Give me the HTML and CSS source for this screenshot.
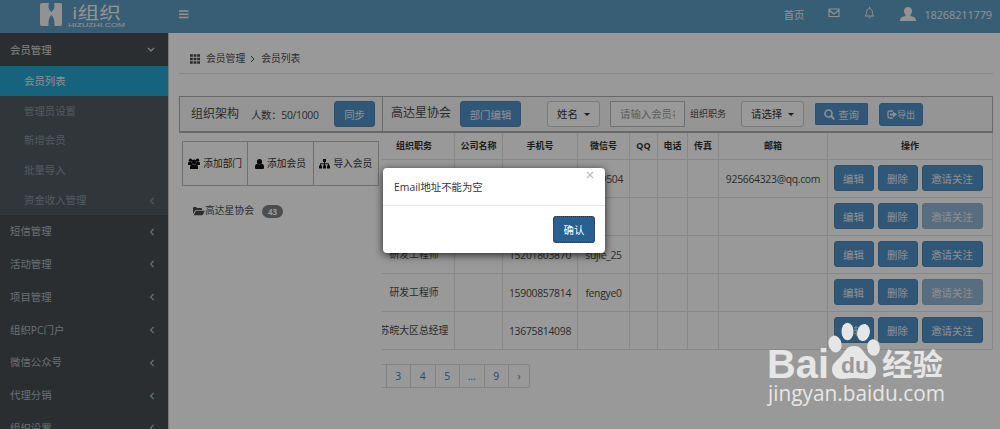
FILE: index.html
```
<!DOCTYPE html>
<html lang="zh-CN">
<head>
	<meta charset="utf-8">
	<title>会员列表</title>
	<link rel="stylesheet" href="styles.css">
</head>
<body>
	<svg class="defs">
		<symbol id="left" viewBox="0 0 6 8"><path d="M4.700 1L1.500 4l3.200 3" fill="none" stroke="currentColor" stroke-width="1.100"/></symbol>
		<symbol id="user" viewBox="0 0 16 14"><path d="M8 0c2.600 0 4 1.700 4 4 0 1.700-.7 3.200-1.800 4 .2 1 1 1.200 2.300 1.600C14.600 10.300 16 11 16 14H0c0-3 1.400-3.700 3.500-4.400C4.800 9.200 5.600 9 5.800 8 4.700 7.200 4 5.700 4 4c0-2.300 1.400-4 4-4z" fill="currentColor"/></symbol>
	</svg>

	<header>
		<div class="logo">
			<svg width="168" height="33">
				<path d="M42 3h7q-2 5 2.300 9Q56 8 54 3h6q2 0 2 2v19q0 2-2 2h-5.500q.5-8-3.200-11-3.300 3-2.800 11H42q-2 0-2-2V5q0-2 2-2z" fill="currentColor"/>
				<text class="brand" x="72" y="18.500" textLength="49" lengthAdjust="spacingAndGlyphs">i组织</text>
				<text class="domain" x="68" y="26.500" textLength="57" lengthAdjust="spacingAndGlyphs">HIZUZHI.COM</text>
			</svg>
		</div>
		<svg class="bars" width="10" height="9"><path d="M0 1h9.500M0 4.200h9.500M0 7.400h9.500" stroke="currentColor" stroke-width="1.500"/></svg>
		<div class="topnav">
			<span class="home">首页</span>
			<svg class="mail" width="12" height="10"><path d="M1 1h10v7.500H1zM1 2l5 4 5-4" fill="none" stroke="currentColor" stroke-width="1.100"/></svg>
			<svg class="bell" width="11" height="12"><path d="M5.500 0v1.500M1 9h9C8.700 8 8.300 7 8.300 4.800 8.300 3 7.200 1.600 5.500 1.600S2.700 3 2.700 4.800C2.700 7 2.300 8 1 9zM4.500 10.400q1 1.200 2 0" fill="none" stroke="currentColor"/></svg>
			<svg class="avatar" width="16" height="14"><use href="#user"/></svg>
			<span class="num">18268211779</span>
		</div>
	</header>

	<div class="wrapper">
		<ul class="sidebar">
			<li class="open">会员管理<svg width="8" height="6"><path d="M1 1l3 3 3-3" fill="none" stroke="currentColor" stroke-width="1.200"/></svg></li>
			<li>
				<ul class="submenu">
					<li class="active">会员列表</li>
					<li>管理员设置</li>
					<li>新增会员</li>
					<li>批量导入</li>
					<li>资金收入管理<svg width="6" height="8"><use href="#left"/></svg></li>
				</ul>
			</li>
			<li>短信管理<svg width="6" height="8"><use href="#left"/></svg></li>
			<li>活动管理<svg width="6" height="8"><use href="#left"/></svg></li>
			<li>项目管理<svg width="6" height="8"><use href="#left"/></svg></li>
			<li>组织PC门户<svg width="6" height="8"><use href="#left"/></svg></li>
			<li>微信公众号<svg width="6" height="8"><use href="#left"/></svg></li>
			<li>代理分销<svg width="6" height="8"><use href="#left"/></svg></li>
			<li>组织设置<svg width="6" height="8"><use href="#left"/></svg></li>
		</ul>

		<div class="content">
			<div class="crumb">
				<svg width="10" height="10"><path d="M0 1.500h10M0 5h10M0 8.500h10" stroke="currentColor" stroke-width="2.600" stroke-dasharray="2.800 .8"/></svg>
				<span>会员管理</span>
				<svg class="gt" width="5" height="8"><path d="M1 1l3 3-3 3" fill="none" stroke="currentColor"/></svg>
				<span>会员列表</span>
			</div>

			<div class="panel">
				<div class="org">
					<span class="title">组织架构</span>
					<span class="count">人数：50/1000</span>
					<button class="btn">同步</button>
				</div>
				<div class="filter">
					<span class="title">高达星协会</span>
					<button class="btn edit">部门编辑</button>
					<div class="select name">姓名<i></i></div>
					<div class="input"><span>请输入会员名</span></div>
					<label>组织职务</label>
					<div class="select choose">请选择<i></i></div>
					<button class="btn search"><svg width="11" height="11"><circle cx="4.500" cy="4.500" r="3.500" fill="none" stroke="currentColor" stroke-width="1.700"/><path d="M7 7l3.200 3.200" stroke="currentColor" stroke-width="2"/></svg>查询</button>
					<button class="btn export"><svg width="10" height="9"><path d="M6 1H2.500Q1 1 1 2.500v4Q1 8 2.500 8H6" fill="none" stroke="currentColor" stroke-width="1.300"/><path d="M3 3.500h3V1.500l4 3-4 3v-2H3z" fill="currentColor"/></svg>导出</button>
				</div>
			</div>

			<div class="body">
				<div class="tree">
					<div class="tools">
						<div><svg width="12" height="11" viewBox="0 0 12 11" fill="currentColor"><circle cx="2.500" cy="2.200" r="1.700"/><circle cx="9.500" cy="2.200" r="1.700"/><circle cx="6" cy="4" r="2.400"/><path d="M0 7V5q0-1 1-1h2.500l1 2.500L3 7zM12 7V5q0-1-1-1H8.500l-1 2.500L9 7zM2 11V9q0-2.500 2-2.500h4q2 0 2 2.500v2z"/></svg>添加部门</div>
						<div><svg width="9" height="10" viewBox="0 0 9 10" fill="currentColor"><circle cx="4.500" cy="2.700" r="2.600"/><path d="M0 9V7.500Q0 5 2.300 4.800q2.200 1.600 4.400 0Q9 5 9 7.500V9q0 1-1 1H1Q0 10 0 9z"/></svg>添加会员</div>
						<div><svg width="11" height="10" viewBox="0 0 11 10"><path d="M4 0h3v3H4zM0 6.500h3v3H0zM4 6.500h3v3H4zM8 6.500h3v3H8z" fill="currentColor"/><path d="M5.500 2v5M1.500 7V4.800h8V7" fill="none" stroke="currentColor"/></svg>导入会员</div>
					</div>
					<div class="node"><svg width="12" height="9" viewBox="0 0 12 9" fill="currentColor"><path d="M0 7V1q0-1 1-1h2l1 1h4q1 0 1 1v1H3.200Q2.300 3 1.800 4z"/><path d="M3 3.800h8.800L10 7.500q-.4.800-1.200.8H.6z"/></svg>高达星协会<b>43</b></div>
				</div>

				<div class="members">
					<table>
						<colgroup><col class="c1"><col class="c2"><col class="c3"><col class="c4"><col class="c5"><col class="c6"><col class="c7"><col class="c8"><col class="c9"></colgroup>
						<tr><th>组织职务</th><th>公司名称</th><th>手机号</th><th>微信号</th><th>QQ</th><th>电话</th><th>传真</th><th>邮箱</th><th>操作</th></tr>
						<tr><td></td><td></td><td></td><td class="num">yu09504</td><td></td><td></td><td></td><td class="num">925664323@qq.com</td><td class="ops"><button class="btn">编辑</button><button class="btn">删除</button><button class="btn">邀请关注</button></td></tr>
						<tr><td></td><td></td><td></td><td></td><td></td><td></td><td></td><td></td><td class="ops"><button class="btn">编辑</button><button class="btn">删除</button><button class="btn" disabled>邀请关注</button></td></tr>
						<tr><td>研发工程师</td><td></td><td class="num">15201803870</td><td class="num">sujie_25</td><td></td><td></td><td></td><td></td><td class="ops"><button class="btn">编辑</button><button class="btn">删除</button><button class="btn">邀请关注</button></td></tr>
						<tr><td>研发工程师</td><td></td><td class="num">15900857814</td><td class="num">fengye0</td><td></td><td></td><td></td><td></td><td class="ops"><button class="btn">编辑</button><button class="btn">删除</button><button class="btn" disabled>邀请关注</button></td></tr>
						<tr><td>苏皖大区总经理</td><td></td><td class="num">13675814098</td><td></td><td></td><td></td><td></td><td></td><td class="ops"><button class="btn">编辑</button><button class="btn">删除</button><button class="btn">邀请关注</button></td></tr>
					</table>
					<div class="pages"><a></a><a>3</a><a>4</a><a>5</a><a>...</a><a>9</a><a>›</a></div>
				</div>
			</div>
		</div>
	</div>

	<div class="backdrop"></div>
	<div class="modal">
		<div class="modal-body">Email地址不能为空<svg class="close" width="8" height="8"><path d="M1 1l6 6M7 1L1 7" stroke="currentColor" stroke-width="1.100"/></svg></div>
		<div class="modal-footer"><button class="btn ok">确认</button></div>
	</div>

	<svg class="watermark" width="190" height="95" fill="currentColor">
		<text class="bai" x="5" y="56.500" textLength="62" lengthAdjust="spacingAndGlyphs">Bai</text>
		<ellipse cx="73" cy="23" rx="6.500" ry="8.500" transform="rotate(-12 73 23)"/>
		<ellipse cx="85.500" cy="10.500" rx="6" ry="8.800"/>
		<ellipse cx="101.500" cy="11.500" rx="6.300" ry="8.700" transform="rotate(12 101.500 11.500)"/>
		<ellipse cx="111.500" cy="26.500" rx="6.300" ry="8.300" transform="rotate(-8 111.500 26.500)"/>
		<path d="M92 25c7 0 9 5 12 9 4 5 10 8 10 15 0 6-4 9-9 9-5 0-8-1-13-1s-8 1-12 1c-6 0-10-4-10-10 0-6 6-9 10-14 3-4 5-9 12-9z"/>
		<text class="du" x="79" y="52" textLength="28" lengthAdjust="spacingAndGlyphs">du</text>
		<text class="jy" x="120" y="53.500" textLength="61" lengthAdjust="spacingAndGlyphs">经验</text>
		<text class="url" x="6" y="80" textLength="177" lengthAdjust="spacingAndGlyphs">jingyan.baidu.com</text>
	</svg>
</body>
</html>
```
FILE: styles.css
```
*{
	box-sizing: border-box;
}
html,body{
	margin: 0;
	height: 429px;
	overflow: hidden;
}
body,button{
	font-family: 'Open Sans', 'Noto Sans CJK SC', sans-serif;
	font-size: 10.4px;
}
body{
	background-color: #fff;
	color: #4a4a4a;
	line-height: 14px;
}
ul{
	list-style: none;
	margin: 0;
	padding: 0;
}
svg{
	display: block;
	flex: none;
}
.defs{
	position: absolute;
	width: 0;
	height: 0;
}
header{
	display: flex;
	height: 33px;
	background-color: #5c9dc4;
	color: #f3f3f3;
}
.logo{
	width: 168px;
}
.brand{
	font-size: 17px;
	fill: currentColor;
}
.domain{
	font-family: 'Liberation Sans', sans-serif;
	font-size: 6px;
	fill: currentColor;
}
.bars{
	margin: 10px 0 0 11px;
}
.topnav{
	display: flex;
	margin-left: auto;
	padding: 8px 8px 0 0;
}
.topnav .num{
	font-size: 11px;
	letter-spacing: -0.15px;
}
.mail{
	margin: 0 24px 0 24px;
}
.bell{
	margin-top: -1px;
}
.avatar{
	margin: -1px 8px 0 25px;
}
.wrapper{
	display: flex;
}
.sidebar{
	width: 168px;
	height: 396px;
	flex: none;
	overflow: hidden;
	background-color: #464e53;
	color: #b2bac0;
}
.sidebar li{
	line-height: 32.8px;
}
.sidebar > li:not(:nth-child(2)), .submenu li{
	display: flex;
	align-items: center;
	justify-content: space-between;
	padding: 1px 13px 0 10px;
	height: 32.8px;
}
.sidebar > .open{
	height: 32.5px;
	color: #ddd;
}
.submenu{
	background-color: #505b61;
	color: #8c99a2;
	height: 149px;
}
.submenu .active{
	background-color: #24a5cf;
	color: #eee;
}
.submenu li, .submenu .active{
	height: 29.8px;
	line-height: 29.8px;
	padding: 2px 13px 0 24px;
}
.content{
	flex: 1;
	padding: 0 8px 0 10px;
	border-left: 1px solid #ccc;
}
.crumb{
	display: flex;
	align-items: center;
	height: 41px;
	padding: 11px 0 0 11px;
	border-bottom: 1px solid #e2e2e2;
}
.crumb span{
	margin-left: 6px;
	font-size: 9.8px;
}
.gt{
	margin-left: 5px;
}
.panel{
	display: flex;
	height: 37px;
	margin-top: 22px;
	border: 1px solid #b0b0b0;
	border-bottom-width: 2px;
	background-color: #f8f8f8;
}
.title{
	font-size: 12px;
}
.btn{
	height: 26px;
	padding: 0;
	border: 1px solid #4a86b8;
	border-radius: 3px;
	background-color: #5092c9;
	color: #eee;
}
.org{
	display: flex;
	align-items: center;
	width: 203px;
	padding-left: 11px;
	border-right: 1px solid #b0b0b0;
}
.count{
	width: 83px;
	margin: 1px 0 0 12px;
	white-space: nowrap;
	letter-spacing: -0.3px;
}
.org .btn{
	width: 41px;
}
.filter{
	display: flex;
	align-items: center;
	flex: 1;
	padding-left: 8px;
}
.filter .title{
	margin-top: -3px;
}
.edit{
	width: 61px;
	margin-left: 9px;
}
.select{
	display: flex;
	align-items: center;
	justify-content: space-between;
	height: 26px;
	padding: 0 9px;
	border: 1px solid #ccc;
	border-radius: 3px;
	background-color: #fff;
	color: #333;
}
.select i{
	border: 3px solid transparent;
	border-top-color: #333;
	border-bottom: 0;
}
.name{
	width: 53px;
	margin-left: 26px;
}
.choose{
	width: 63px;
	margin-left: 15px;
}
.input{
	width: 75px;
	height: 26px;
	margin-left: 10px;
	padding: 5px 9px;
	border: 1px solid #bbb;
	background-color: #fff;
	color: #999;
}
.input span{
	display: block;
	overflow: hidden;
	white-space: nowrap;
}
.filter label{
	margin-left: 5px;
	font-size: 9px;
}
.search, .export{
	display: flex;
	align-items: center;
	justify-content: center;
}
.search{
	width: 53px;
	height: 22px;
	margin-left: 11px;
	gap: 3px;
	border-radius: 1px;
}
.export{
	width: 44px;
	height: 23px;
	margin-left: 11px;
	font-size: 9px;
}
.body{
	display: flex;
}
.tree{
	width: 203px;
	padding: 8px 3px;
}
.tools{
	display: flex;
	width: 197px;
	height: 45px;
	border: 1px solid #bbb;
	color: #333;
}
.tools div{
	display: flex;
	flex: 1;
	align-items: center;
	justify-content: center;
	gap: 3px;
	font-size: 9.7px;
	white-space: nowrap;
}
.tools div + div{
	border-left: 1px solid #bbb;
}
.tools svg{
	color: #111;
}
.node{
	display: flex;
	align-items: center;
	margin: 18px 0 0 11px;
	font-size: 9.8px;
}
.node b{
	width: 21px;
	margin-left: 8px;
	border-radius: 7px;
	background-color: #808080;
	color: #fff;
	font-size: 8px;
	line-height: 13px;
	text-align: center;
}
.members{
	width: 611px;
	overflow: hidden;
}
table{
	width: 624px;
	margin-left: -14px;
	table-layout: fixed;
	border-collapse: collapse;
}
.c1{ width: 86px; }
.c2{ width: 48px; }
.c3{ width: 75px; }
.c4{ width: 52px; }
.c5{ width: 28px; }
.c6{ width: 30px; }
.c7{ width: 31px; }
.c8{ width: 109px; }
.c9{ width: 165px; }
th,td{
	height: 38px;
	padding: 0;
	border: 1px solid #e3e3e3;
	border-top: 0;
	text-align: center;
	white-space: nowrap;
}
th{
	height: 26px;
	padding-top: 1px;
	font-size: 9px;
	color: #333;
}
td{
	padding-top: 1px;
	font-size: 9.8px;
}
td.num{
	font-size: 10.4px;
	letter-spacing: -0.3px;
}
td:first-child, th:first-child{
	padding-left: 5px;
}
.ops{
	padding: 0;
}
.ops .btn{
	width: 40px;
	margin-right: 4px;
}
.ops .btn:last-child{
	width: 61px;
	margin-right: 4px;
}
.btn:disabled{
	background-color: #93b6d6;
	border-color: #8fafcc;
}
.pages{
	display: flex;
	margin: 14px 0 0 -20px;
}
.pages a{
	width: 24.5px;
	height: 24px;
	border: 1px solid #d9d9d9;
	border-left: 0;
	color: #3f7cae;
	line-height: 22px;
	text-align: center;
}
.pages a:last-child{
	width: 21px;
	border-radius: 0 3px 3px 0;
}
.backdrop{
	position: absolute;
	inset: 0;
	background-color: rgba(0,0,0,.4);
}
.modal{
	position: absolute;
	left: 383px;
	top: 168px;
	width: 222px;
	height: 85px;
	border-radius: 4px;
	background-color: #fff;
	box-shadow: 0 2px 8px rgba(0,0,0,.75);
	color: #333;
}
.modal-body{
	display: flex;
	justify-content: space-between;
	height: 38px;
	padding: 12px 11px 0;
	border-bottom: 1px solid #e5e5e5;
}
.close{
	margin-top: -9px;
	color: #bbb;
}
.modal-footer{
	display: flex;
	justify-content: flex-end;
	padding: 10px 10px 0;
}
.ok{
	width: 42px;
	height: 27px;
	border-color: #173a56;
	background-color: #286090;
	color: #fff;
	outline: 1px dotted #555;
	outline-offset: -1px;
}
.watermark{
	position: absolute;
	left: 762px;
	top: 321px;
	color: #e6e6e6;
}
.bai{
	font: bold 41px 'Liberation Sans', sans-serif;
}
.du{
	font: bold 22px 'Liberation Sans', sans-serif;
	fill: #999;
}
.jy{
	font: bold 30px 'Noto Sans CJK SC', sans-serif;
}
.url{
	font: 21px 'Open Sans', sans-serif;
}
```
